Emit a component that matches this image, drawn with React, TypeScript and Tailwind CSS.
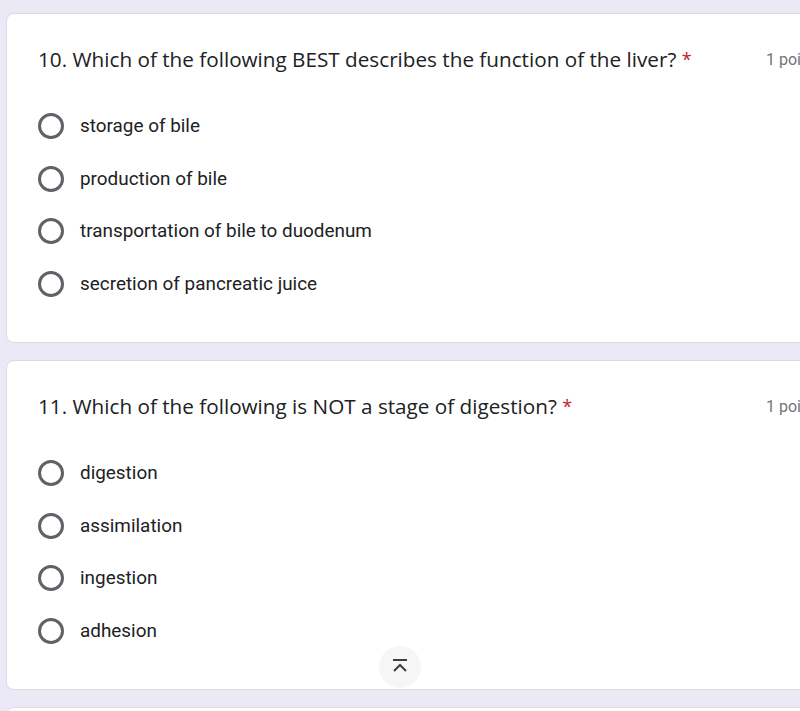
type Question = {
  title: string;
  options: string[];
};

const questions: Question[] = [
  {
    title: "10. Which of the following BEST describes the function of the liver?",
    options: [
      "storage of bile",
      "production of bile",
      "transportation of bile to duodenum",
      "secretion of pancreatic juice",
    ],
  },
  {
    title: "11. Which of the following is NOT a stage of digestion?",
    options: ["digestion", "assimilation", "ingestion", "adhesion"],
  },
];

const Radio = () => (
  <span className="block w-[26px] h-[26px] rounded-full border-[3px] border-[#5f6368] shrink-0" />
);

const QuestionCard = ({ q, last }: { q: Question; last?: boolean }) => (
  <div className="relative shrink-0 w-[830px] h-[330px] bg-white border border-[#dadce0] rounded-lg pl-[31px] pt-[31px]">
    <div className="flex items-start">
      <h2 className="w-[728px] text-[20.7px] leading-[28px] text-[#202124] font-['Open_Sans',sans-serif]">
        {q.title} <span className="text-[#c5221f] text-[18px] align-top">*</span>
      </h2>
      <span className="pt-[3px] text-[16px] text-[#70757a] font-['Roboto',sans-serif] whitespace-nowrap">
        1 point
      </span>
    </div>
    <div className="mt-[27px] flex flex-col">
      {q.options.map((o) => (
        <div key={o} className="flex items-center h-[52.5px]">
          <Radio />
          <span className="ml-[16px] text-[18.9px] text-[#202124] font-['Roboto',sans-serif]">
            {o}
          </span>
        </div>
      ))}
    </div>
    {last && (
      <div className="absolute left-[372px] top-[285px] w-[42px] h-[42px] rounded-full bg-[#f6f6f6] flex items-center justify-center">
        <svg width="20" height="20" viewBox="0 0 20 20" fill="none" stroke="#3c4043" strokeWidth="2">
          <path d="M3 3h14" />
          <path d="M4 14l6-6 6 6" />
        </svg>
      </div>
    )}
  </div>
);

export default function App() {
  return (
    <div className="w-[800px] h-[711px] overflow-hidden bg-[#ebe9f6] pt-[13px] pl-[6px] flex flex-col gap-[17px]">
      <QuestionCard q={questions[0]} />
      <QuestionCard q={questions[1]} last />
      <div className="w-[830px] h-[100px] shrink-0 bg-white border border-[#dadce0] rounded-lg" />
    </div>
  );
}
